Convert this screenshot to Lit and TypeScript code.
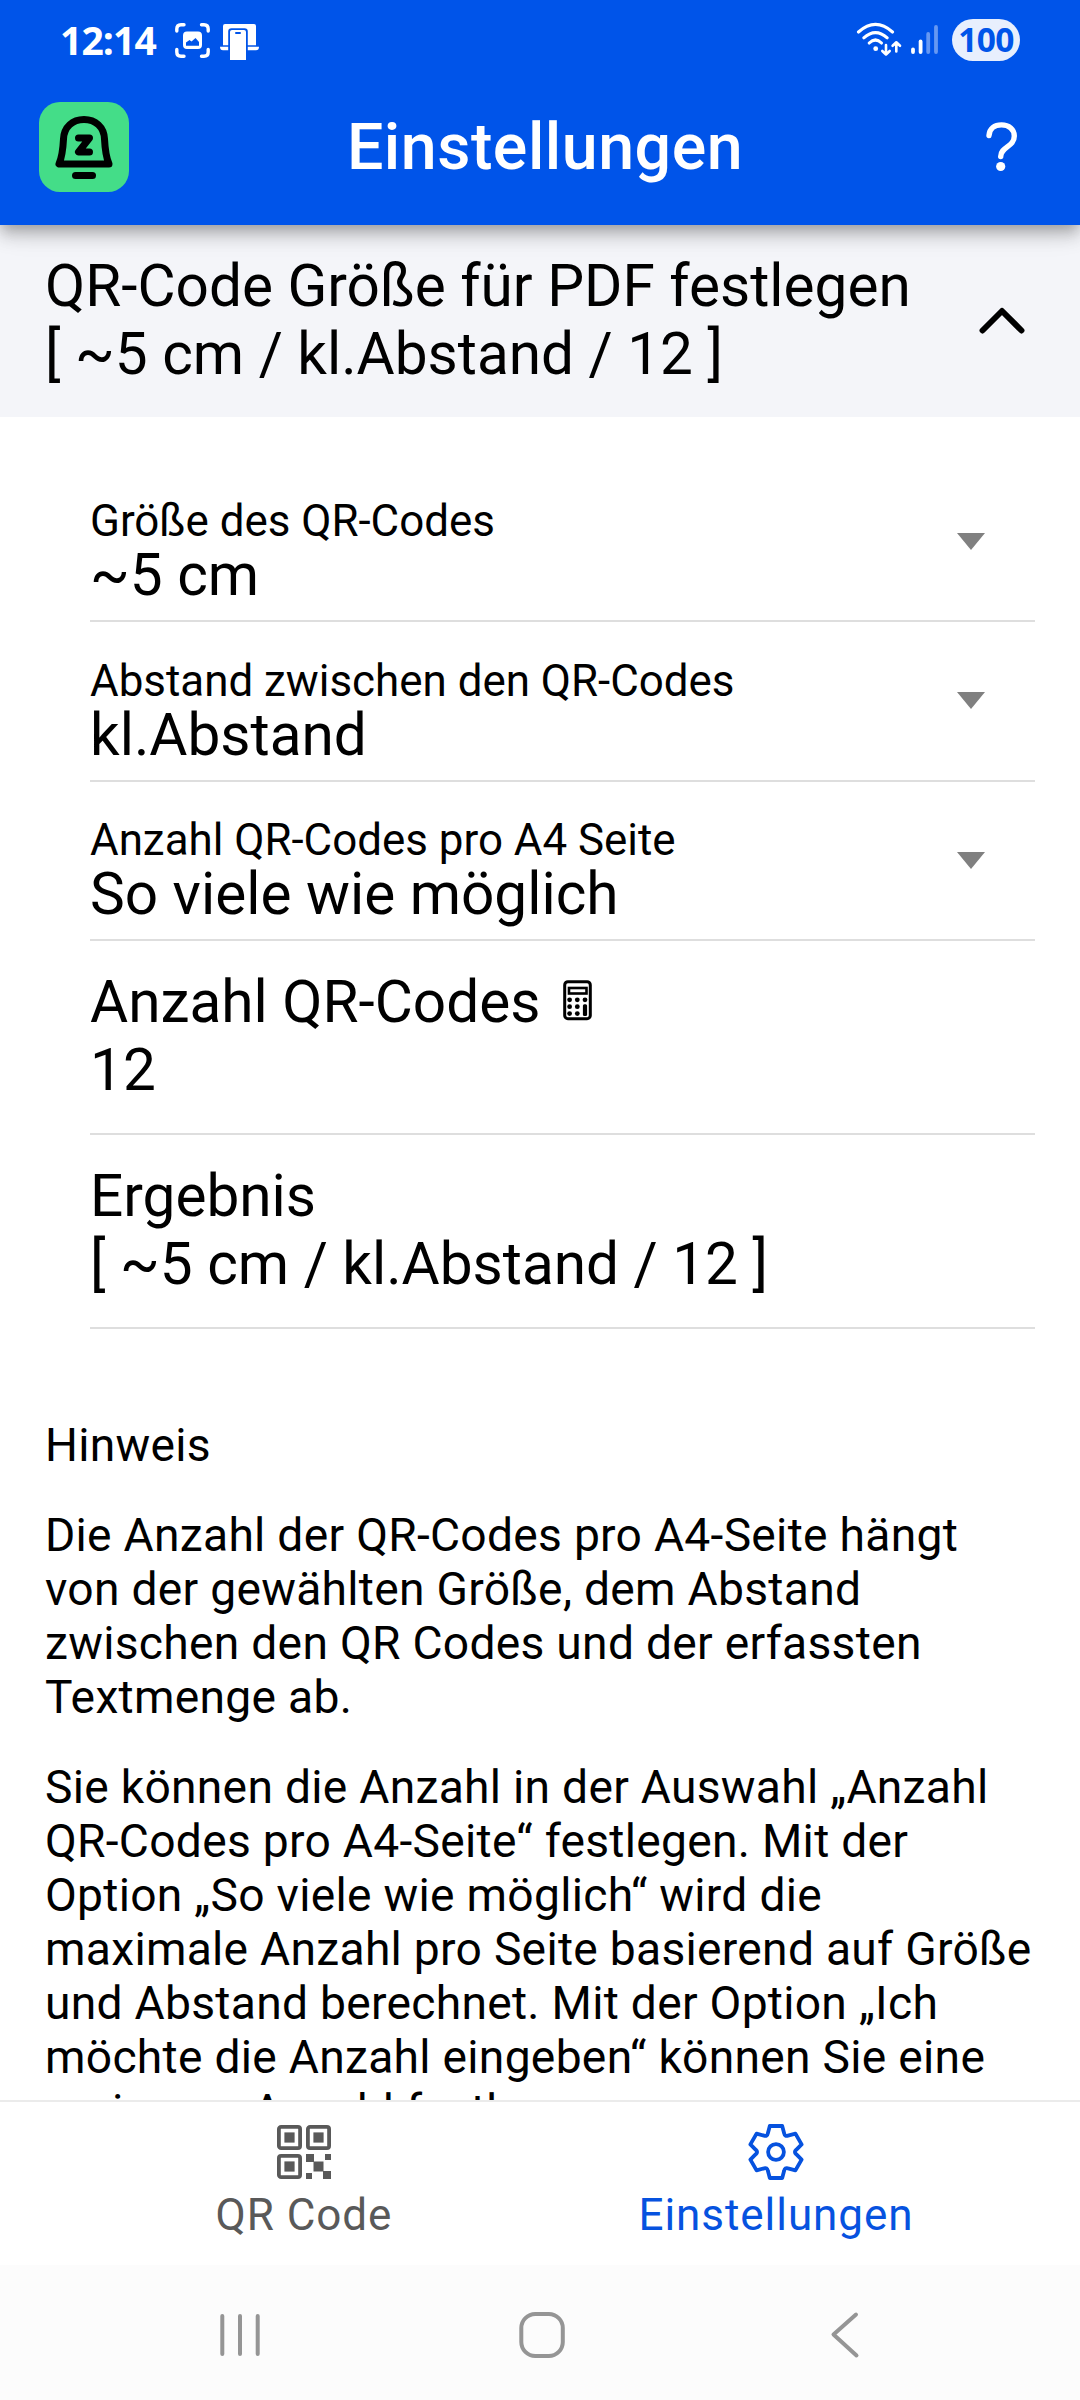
import { LitElement, html, css, svg } from "lit";
import { customElement, property } from "lit/decorators.js";

/** Outline of a six-toothed gear around the origin. */
function gearPath(): string {
  const tooth: [number, number][] = [
    [-8.2, -18.6],
    [-6.2, -26],
    [6.2, -26],
    [8.2, -18.6],
  ];
  const parts: string[] = [];
  for (let i = 0; i < 6; i++) {
    const a = (i * Math.PI) / 3;
    const p = tooth.map(([x, y]) => [
      (x * Math.cos(a) - y * Math.sin(a)).toFixed(2),
      (x * Math.sin(a) + y * Math.cos(a)).toFixed(2),
    ]);
    const v = a - Math.PI / 6;
    const valley = `${(17.6 * Math.sin(v)).toFixed(2)} ${(-17.6 * Math.cos(v)).toFixed(2)}`;
    if (i === 0) parts.push(`M${p[0].join(" ")}`);
    else parts.push(`Q${valley} ${p[0].join(" ")}`);
    parts.push(`L${p[1].join(" ")} L${p[2].join(" ")} L${p[3].join(" ")}`);
  }
  const last = -Math.PI / 6;
  parts.push(
    `Q${(17.6 * Math.sin(last)).toFixed(2)} ${(-17.6 * Math.cos(last)).toFixed(2)} -8.2 -18.6 Z`,
  );
  return parts.join(" ");
}

@customElement("status-bar")
class StatusBar extends LitElement {
  static styles = css`
    :host {
      display: flex;
      height: 80px;
      box-sizing: border-box;
      padding: 19px 60px 0 60px;
      color: #fff;
      font-family: "Open Sans", "Noto Sans", sans-serif;
    }
    .time {
      width: 115px;
      font-size: 39px;
      font-weight: 700;
      line-height: 41px;
      letter-spacing: -0.9px;
    }
    .right {
      margin-left: auto;
    }
    svg {
      display: block;
    }
    .pill {
      width: 68px;
      height: 42px;
      margin-left: 10px;
      border-radius: 21px;
      background: #e8effd;
      color: #0054e9;
      font-size: 33.5px;
      font-weight: 700;
      line-height: 41px;
      letter-spacing: -0.6px;
      text-align: center;
    }
  `;
  render() {
    return html`
      <div class="time">12:14</div>
      <svg width="88" height="46" viewBox="175 19 88 46" fill="none">
        <g stroke="#fff" stroke-width="3.4" stroke-linecap="round">
          <path d="M176.8 31 V29 Q176.8 24.7 181 24.7 H184" />
          <path d="M201.500 24.700 H204 Q208.200 24.700 208.200 29 V31" />
          <path d="M176.800 49.500 V52 Q176.800 56.200 181 56.200 H184" />
          <path d="M201.500 56.200 H204 Q208.200 56.200 208.200 52 V49.500" />
        </g>
        <path
          fill="#fff"
          fill-rule="evenodd"
          d="M187 31.500 H198 Q202 31.500 202 35.500 V45 Q202 49 198 49 H187 Q183 49 183 45 V35.500 Q183 31.500 187 31.500 Z M186 45.800 H199 V42 L195.500 38 L191.500 41.500 L189.500 40 L186 42.500 Z"
        />
        <path fill="#fff" d="M225 24 H254 Q256 24 256 26 V45.300 H247.800 V31.500 Q247.800 28.300 244.500 28.300 H231.500 Q228.200 28.300 228.200 31.500 V45.300 H223 V26 Q223 24 225 24 Z" />
        <path fill="#fff" d="M220 46.800 H228.200 V50.300 H223 Q220 50.300 220 46.800 Z M247.800 46.800 H259 Q259 50.300 256 50.300 H247.800 Z" />
        <path fill="#fff" d="M232 30 H244 Q246 30 246 32 V60 H230 V32 Q230 30 232 30 Z" />
        <rect x="235" y="32" width="6" height="2" rx="1" fill="#0054e9" />
      </svg>
      <svg class="right" width="86" height="46" viewBox="856 19 86 46" fill="none" stroke="#fff" stroke-linecap="round" stroke-linejoin="round">
        <g stroke-width="3.1">
          <path d="M858.500 32 Q875.500 16.800 892.500 32" />
          <path d="M863.800 37.800 Q875.500 27.300 887.200 37.800" />
          <path d="M869.200 43 Q875.500 37 881.500 43" />
        </g>
        <circle cx="875.700" cy="48.700" r="2.400" fill="#fff" stroke="none" />
        <g stroke-width="2.600">
          <path d="M886 45 V54 M882.300 51 L886 54.500 L889.700 51" />
          <path d="M896.300 51.500 V42.500 M892.600 45.800 L896.300 42.300 L900 45.800" />
        </g>
        <g stroke-width="3.800">
          <path d="M913 49.500 V52" />
          <path d="M920.600 41.500 V52" />
          <path stroke="#6698f2" d="M928.200 34 V52" />
          <path stroke="#6698f2" d="M936 27 V52" />
        </g>
      </svg>
      <div class="pill">100</div>
    `;
  }
}

@customElement("app-header")
class AppHeader extends LitElement {
  static styles = css`
    :host {
      display: grid;
      grid-template-columns: 90px 1fr 90px;
      align-items: center;
      height: 145px;
      box-sizing: border-box;
      padding: 0 35px 11px 39px;
      color: #fff;
    }
    .title {
      padding: 0 0 0 6px;
      text-align: center;
      font-size: 64.5px;
      font-weight: 500;
      line-height: 76px;
      letter-spacing: 0.5px;
    }
    svg {
      display: block;
    }
    .help {
      justify-self: end;
      margin-right: 27px;
    }
  `;
  render() {
    return html`
      <svg width="90" height="90" viewBox="0 0 90 90" fill="none">
        <rect width="90" height="90" rx="21" fill="#44dd88" />
        <g stroke="#000" stroke-width="7" stroke-linecap="round" stroke-linejoin="round">
          <path d="M20 62 H70 C66.500 54 66 47 65.500 37 C65 25 56.500 17.500 45 17.500 C33.500 17.500 25 25 24.500 37 C24 47 23.500 54 20 62 Z" />
          <path d="M39.500 36 H50.500 L39.500 50 H50.500" />
          <path d="M36.500 73.500 H53.500" />
        </g>
      </svg>
      <div class="title">Einstellungen</div>
      <svg class="help" width="34" height="54" viewBox="984 119 34 54" fill="none">
        <path stroke="#fff" stroke-width="5.400" stroke-linecap="round" d="M989 134.500 C989.500 127.500 994.500 123.900 1001.500 123.900 C1009 123.900 1014.300 128.500 1014.300 135 C1014.300 146 1000.700 145.500 1000.700 155.500" />
        <circle cx="1000.700" cy="165.500" r="4.600" fill="#fff" />
      </svg>
    `;
  }
}

@customElement("select-row")
class SelectRow extends LitElement {
  @property() label = "";
  @property() value = "";
  static styles = css`
    :host {
      display: flex;
      align-items: center;
      justify-content: space-between;
      height: 159.5px;
      box-sizing: border-box;
      padding: 21.5px 50px 0 0;
      border-bottom: 2px solid #dedede;
    }
    .label {
      font-size: 43.9px;
      line-height: 47px;
    }
    .value {
      font-size: 58.5px;
      line-height: 61px;
    }
    svg {
      display: block;
      margin-bottom: 22px;
    }
  `;
  render() {
    return html`
      <div>
        <div class="label">${this.label}</div>
        <div class="value">${this.value}</div>
      </div>
      <svg width="28" height="17" viewBox="0 0 28 17"><path d="M0 0 H28 L14 17 Z" fill="#808080" /></svg>
    `;
  }
}

@customElement("tab-bar")
class TabBar extends LitElement {
  static styles = css`
    :host {
      display: flex;
      height: 165px;
      box-sizing: border-box;
      padding: 0 68px;
      border-top: 2px solid #ebebeb;
      background: #fff;
    }
    .tab {
      flex: 1;
      display: flex;
      flex-direction: column;
      align-items: center;
      padding-top: 20px;
      color: #595959;
      font-size: 44px;
      line-height: 52px;
      letter-spacing: 0.95px;
    }
    .active {
      color: #0652df;
    }
    svg {
      display: block;
      margin-bottom: 7px;
    }
  `;
  render() {
    const finder = (x: number, y: number) => svg`
      <rect x=${x + 1.9} y=${y + 1.9} width="21.200" height="21.200" rx="2.200" fill="none" stroke="currentColor" stroke-width="3.800" />
      <rect x=${x + 7.4} y=${y + 7.4} width="10.200" height="10.200" fill="currentColor" />`;
    return html`
      <div class="tab">
        <svg width="60" height="60" viewBox="-3 -3 60 60">
          ${finder(0, 0)} ${finder(29, 0)} ${finder(0, 29)}
          <path fill="currentColor" d="M29 29 h8 v8 h-8 z M48 29 h6 v6 h-6 z M36.500 36.500 h10 v10 h-10 z M29 48 h6 v6 h-6 z M46 46 h8 v8 h-8 z" />
        </svg>
        <span>QR Code</span>
      </div>
      <div class="tab active">
        <svg width="60" height="60" viewBox="-30 -30 60 60" fill="none" stroke="currentColor" stroke-width="3.800" stroke-linejoin="round">
          <path d=${gearPath()} />
          <circle r="7.900" />
        </svg>
        <span>Einstellungen</span>
      </div>
    `;
  }
}

@customElement("app-root")
class AppRoot extends LitElement {
  static styles = css`
    :host {
      display: flex;
      flex-direction: column;
      width: 1080px;
      height: 2400px;
      overflow: hidden;
      background: #fff;
      color: #000;
      font-family: Roboto, "Liberation Sans", sans-serif;
    }
    .top {
      flex: none;
      position: relative;
      height: 225px;
      background: #0054e9;
      box-shadow:
        0 6px 12px -3px rgba(0, 0, 0, 0.2),
        0 12px 15px 0 rgba(0, 0, 0, 0.14),
        0 3px 30px 0 rgba(0, 0, 0, 0.12);
    }
    .content {
      flex: 1;
      min-height: 0;
      overflow: hidden;
    }
    .accordion {
      display: flex;
      justify-content: space-between;
      align-items: center;
      height: 192px;
      box-sizing: border-box;
      padding: 0 52px 2px 45px;
      background: #f4f5f9;
      font-size: 58.5px;
      line-height: 68px;
    }
    .panel {
      padding: 45.5px 45px 0 90px;
    }
    .item {
      height: 194px;
      box-sizing: border-box;
      padding-top: 27px;
      border-bottom: 2px solid #dedede;
      font-size: 58.5px;
      line-height: 68px;
    }
    .line {
      display: flex;
      align-items: center;
      gap: 23px;
    }
    .line svg {
      margin-bottom: 3px;
    }
    .notes {
      padding: 89px 45px 0;
      font-size: 46.2px;
      line-height: 54px;
      letter-spacing: 0.28px;
    }
    .notes p {
      margin: 0 0 36px;
    }
    tab-bar {
      flex: none;
    }
    .nav {
      flex: none;
      height: 135px;
      background: #fcfcfc;
    }
    svg {
      display: block;
    }
  `;
  render() {
    return html`
      <div class="top">
        <status-bar></status-bar>
        <app-header></app-header>
      </div>
      <div class="content">
        <div class="accordion">
          <div>QR-Code Größe für PDF festlegen<br />[ ~5 cm / kl.Abstand / 12 ]</div>
          <svg width="52" height="32" viewBox="0 0 52 32" fill="none">
            <path d="M6.500 26.500 L26 7 L45.500 26.500" stroke="#000" stroke-width="5.900" stroke-linecap="round" stroke-linejoin="round" />
          </svg>
        </div>
        <div class="panel">
          <select-row label="Größe des QR-Codes" value="~5 cm"></select-row>
          <select-row label="Abstand zwischen den QR-Codes" value="kl.Abstand"></select-row>
          <select-row label="Anzahl QR-Codes pro A4 Seite" value="So viele wie möglich"></select-row>
          <div class="item">
            <div class="line">
              <span>Anzahl QR-Codes</span>
              <svg width="29" height="41" viewBox="0 0 29 41" fill="none" stroke="#000">
                <rect x="1.700" y="1.700" width="25.600" height="37" rx="3.200" stroke-width="3" />
                <rect x="6" y="8" width="17.500" height="5.500" stroke-width="2.600" />
                <g fill="#000" stroke="none">
                  <circle cx="6.600" cy="19.800" r="2.400" /><circle cx="14.300" cy="19.800" r="2.400" /><circle cx="22" cy="19.800" r="2.400" />
                  <circle cx="6.600" cy="26.700" r="2.400" /><circle cx="14.300" cy="26.700" r="2.400" />
                  <circle cx="6.600" cy="33.600" r="2.400" /><circle cx="14.300" cy="33.600" r="2.400" />
                  <rect x="19.900" y="24.300" width="4.200" height="11.700" rx="1.500" />
                </g>
              </svg>
            </div>
            <div>12</div>
          </div>
          <div class="item">
            <div>Ergebnis</div>
            <div>[ ~5 cm / kl.Abstand / 12 ]</div>
          </div>
        </div>
        <div class="notes">
          <p>Hinweis</p>
          <p>Die Anzahl der QR-Codes pro A4-Seite hängt von der gewählten Größe, dem Abstand zwischen den QR Codes und der erfassten Textmenge ab.</p>
          <p>Sie können die Anzahl in der Auswahl „Anzahl QR-Codes pro A4-Seite“ festlegen. Mit der Option „So viele wie möglich“ wird die maximale Anzahl pro Seite basierend auf Größe und Abstand berechnet. Mit der Option „Ich möchte die Anzahl eingeben“ können Sie eine geringere Anzahl festlegen.</p>
        </div>
      </div>
      <tab-bar></tab-bar>
      <svg class="nav" width="1080" height="135" viewBox="0 2265 1080 135" fill="none" stroke="#959595" stroke-width="4" stroke-linecap="round" stroke-linejoin="round">
        <path d="M222.300 2316 V2354 M240 2316 V2354 M257.700 2316 V2354" />
        <rect x="521.300" y="2314" width="41.500" height="42" rx="14" />
        <path d="M856 2314.500 L833.500 2334.500 L856.500 2355.500" />
      </svg>
    `;
  }
}
